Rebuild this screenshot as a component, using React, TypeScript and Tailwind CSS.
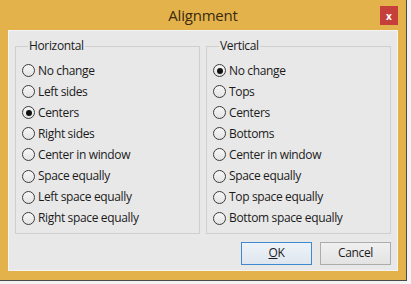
import React from "react";

const FONT = { fontFamily: '"Open Sans", "Noto Sans", sans-serif' };

function Radio({ label, checked }: { label: string; checked?: boolean }) {
  return (
    <div className="flex h-[21.1px] items-center">
      <span className="flex h-[13px] w-[13px] shrink-0 items-center justify-center rounded-full border border-[#3c3c3c] bg-gradient-to-b from-[#f6f6f6] to-[#e4e4e4]">
        {checked && <span className="h-[6px] w-[6px] rounded-full bg-[#111]" />}
      </span>
      <span className="ml-[3px] text-[12px] leading-none tracking-[-0.35px] text-[#1b1b1b]">{label}</span>
    </div>
  );
}

function Group({ title, items, checked }: { title: string; items: string[]; checked: number }) {
  return (
    <fieldset className="flex-1 border border-[#cfcfcf] pb-[4px] pl-[6px] pt-[6px]">
      <legend className="ml-[6px] px-[1px] text-[12px] leading-[16px] tracking-[-0.35px] text-[#1b1b1b]">{title}</legend>
      <div className="flex flex-col">
        {items.map((it, i) => (
          <Radio key={it} label={it} checked={i === checked} />
        ))}
      </div>
    </fieldset>
  );
}

export default function App() {
  return (
    <div className="h-[284px] w-[411px] bg-[#f3f3f3]" style={FONT}>
      <div className="flex h-[281px] w-[407px] flex-col border-b border-r border-[#4a4a4a] bg-[#e4b24b]">
        <div className="relative flex h-[30px] shrink-0 items-center justify-center">
          <span className="text-[15px] leading-none tracking-[-0.2px] text-[#3b2a0e]">Alignment</span>
          <div className="absolute left-[380px] top-[6px] flex h-[19px] w-[18px] items-center justify-center bg-[#c5403a]">
            <span className="text-[10px] font-bold leading-none text-white">x</span>
          </div>
        </div>
        <div className="mx-[8px] flex h-[241px] flex-col border border-[#f4f4f4] bg-[#e8e8e8] px-[6px] pt-[7px]">
          <div className="flex gap-[6px]">
            <Group
              title="Horizontal"
              checked={2}
              items={[
                "No change",
                "Left sides",
                "Centers",
                "Right sides",
                "Center in window",
                "Space equally",
                "Left space equally",
                "Right space equally",
              ]}
            />
            <Group
              title="Vertical"
              checked={0}
              items={[
                "No change",
                "Tops",
                "Centers",
                "Bottoms",
                "Center in window",
                "Space equally",
                "Top space equally",
                "Bottom space equally",
              ]}
            />
          </div>
          <div className="mt-[8px] flex justify-end gap-[8px]">
            <button className="flex h-[23px] w-[71px] items-center justify-center border border-[#3e8ad0] bg-gradient-to-b from-[#eef3f8] to-[#dfe6ee] text-[12px] tracking-[-0.35px] text-[#1b1b1b]">
              <span>
                <span className="underline">O</span>K
              </span>
            </button>
            <button className="flex h-[23px] w-[71px] items-center justify-center border border-[#acacac] bg-gradient-to-b from-[#f0f0f0] to-[#e3e3e3] text-[12px] tracking-[-0.35px] text-[#1b1b1b]">
              Cancel
            </button>
          </div>
        </div>
      </div>
    </div>
  );
}
